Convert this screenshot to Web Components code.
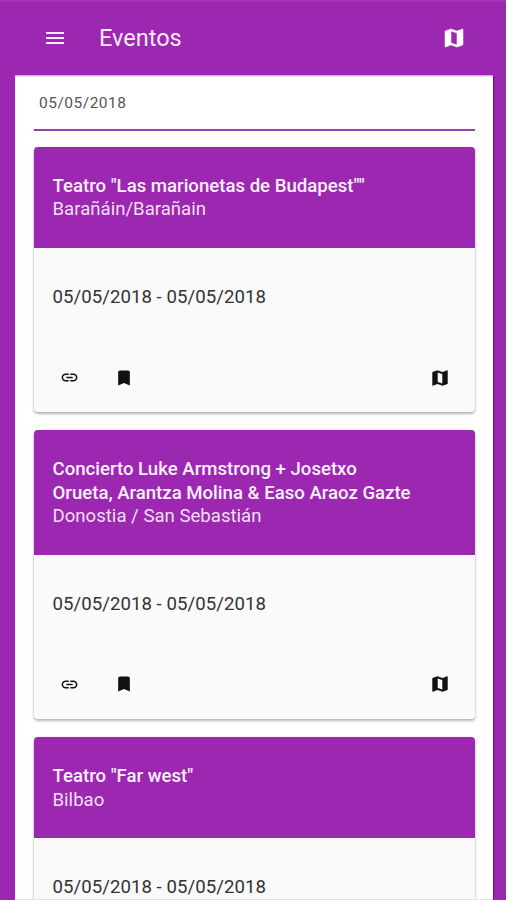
<!DOCTYPE html>
<html lang="es">
<head>
<meta charset="utf-8">
<title>Eventos</title>
<style>
  html, body { margin: 0; height: 100%; }
  body { background: #9c27b0; font-family: Roboto, "Liberation Sans", sans-serif; overflow: hidden; }
</style>
</head>
<body>
<events-app>
  <app-bar slot="bar">Eventos</app-bar>
  <date-field>05/05/2018</date-field>
  <event-card>
    <span slot="title">Teatro "Las marionetas de Budapest""</span>
    <span slot="place">Barañáin/Barañain</span>
    <span slot="dates">05/05/2018 - 05/05/2018</span>
  </event-card>
  <event-card>
    <span slot="title">Concierto Luke Armstrong + Josetxo<br>Orueta, Arantza Molina &amp; Easo Araoz Gazte</span>
    <span slot="place">Donostia / San Sebastián</span>
    <span slot="dates">05/05/2018 - 05/05/2018</span>
  </event-card>
  <event-card>
    <span slot="title">Teatro "Far west"</span>
    <span slot="place">Bilbao</span>
    <span slot="dates">05/05/2018 - 05/05/2018</span>
  </event-card>
</events-app>
<script>
  const icons = {
    menu: 'M3 18h18v-2H3v2zm0-5h18v-2H3v2zm0-7v2h18V6H3z',
    map: 'M20.5 3l-.16.03L15 5.1 9 3 3.36 4.9c-.21.07-.36.25-.36.48V20.5c0 .28.22.5.5.5l.16-.03L9 18.9l6 2.1 5.64-1.9c.21-.07.36-.25.36-.48V3.5c0-.28-.22-.5-.5-.5zM15 19l-6-2.11V5l6 2.11V19z',
    link: 'M3.9 12c0-1.71 1.39-3.1 3.1-3.1h4V7H7c-2.76 0-5 2.24-5 5s2.24 5 5 5h4v-1.9H7c-1.71 0-3.1-1.39-3.1-3.1zM8 13h8v-2H8v2zm9-6h-4v1.9h4c1.71 0 3.1 1.39 3.1 3.1s-1.39 3.1-3.1 3.1h-4V17h4c2.76 0 5-2.24 5-5s-2.24-5-5-5z',
    bookmark: 'M17 3H7c-1.1 0-2 .9-2 2v16l7-3 7 3V5c0-1.1-.9-2-2-2z'
  };

  const define = (name, html, setup) => customElements.define(name, class extends HTMLElement {
    constructor() {
      super();
      this.attachShadow({ mode: 'open' }).innerHTML = html;
    }
    connectedCallback() { if (setup) setup(this); }
  });

  define('md-icon', `
    <style>
      :host { display: block; flex: none; width: 20px; height: 20px; }
      svg { display: block; width: 100%; height: 100%; fill: currentColor; }
      :host([name="map"]) path { stroke: currentColor; stroke-width: .5; }
    </style>
    <svg viewBox="0 0 24 24" aria-hidden="true"><path/></svg>`,
    el => el.shadowRoot.querySelector('path').setAttribute('d', icons[el.getAttribute('name')]));

  define('app-bar', `
    <style>
      :host { display: flex; align-items: center; box-sizing: border-box; height: 75px;
              padding: 0 40px 1px 43px; color: #fbeafd; border-top: 2px solid #a235b8; }
      h1 { flex: 1; margin: 0 0 0 32px; font-size: 23.5px; line-height: 28px; font-weight: 400; }
      md-icon { width: 24px; height: 24px; }
      .map { color: #fff; }
    </style>
    <md-icon name="menu"></md-icon>
    <h1><slot></slot></h1>
    <md-icon class="map" name="map"></md-icon>`);

  define('date-field', `
    <style>
      :host { display: block; box-sizing: border-box; height: 56px; padding: 18px 5px 0;
              border-bottom: 2px solid #9c3fae; margin-bottom: 16px;
              font-size: 15.5px; line-height: 20px; letter-spacing: .5px; color: #555; }
    </style>
    <slot></slot>`);

  define('event-card', `
    <style>
      :host { display: block; border-radius: 4px; background: #fafafa; overflow: hidden;
              margin-bottom: 18.2px; font-size: 18.6px; line-height: 23.4px;
              box-shadow: 0 2px 3px rgba(0,0,0,.28), 0 0 2px rgba(0,0,0,.12); }
      header { background: #9c27b0; color: #f6dffa; padding: 28px 18.5px 26.4px; }
      .title { font-weight: 500; color: #fdf0ff; }
      .dates { padding: 37.8px 18.5px 0; height: 81.7px; color: #333; letter-spacing: .05px; }
      footer { display: flex; align-items: center; padding: 0 25px 24.5px 26px; color: #111; }
      .link { width: 19px; height: 19px; margin-right: 1px; }
      .save { margin-left: 34px; }
      .map { margin-left: auto; }
    </style>
    <header>
      <div class="title"><slot name="title"></slot></div>
      <div class="place"><slot name="place"></slot></div>
    </header>
    <div class="dates"><slot name="dates"></slot></div>
    <footer>
      <md-icon class="link" name="link"></md-icon>
      <md-icon class="save" name="bookmark"></md-icon>
      <md-icon class="map" name="map"></md-icon>
    </footer>`);

  define('events-app', `
    <style>
      :host { display: flex; flex-direction: column; height: 100vh; background: #9c27b0; overflow: hidden; }
      main { flex: 1; min-height: 0; overflow: hidden; box-sizing: border-box; margin: 0 13px 0 15px; padding: 0 18px 0 19px;
             background: #fff; border-bottom: 1px solid #e4e4e4;
             box-shadow: inset 0 2px 2px -1px rgba(0,0,0,.35), 1px 0 1px #7c0a92; }
    </style>
    <slot name="bar"></slot>
    <main><slot></slot></main>`);
</script>
</body>
</html>
